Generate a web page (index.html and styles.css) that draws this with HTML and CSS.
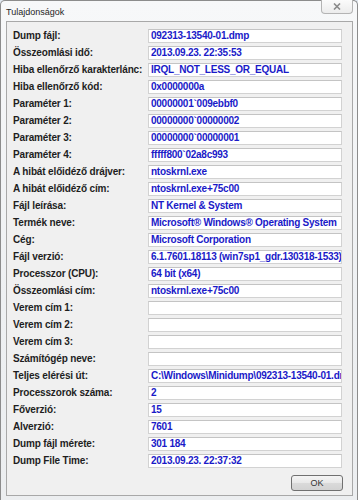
FILE: index.html
```html
<!DOCTYPE html>
<html>
<head>
<meta charset="utf-8">
<link rel="stylesheet" href="styles.css">
</head>
<body>
<div class="window">
  <div class="titlebar">
    <span class="title">Tulajdonságok</span>
    <div class="close">
      <svg width="8" height="7" viewBox="0 0 8 7"><path d="M1 0.5 L7 6.5 M7 0.5 L1 6.5" stroke="#8a8a8a" stroke-width="1.6" fill="none"/></svg>
    </div>
  </div>
  <div class="panel">
    <div class="grid">
      <div class="label">Dump fájl:</div><div class="value">092313-13540-01.dmp</div>
      <div class="label">Összeomlási idő:</div><div class="value">2013.09.23. 22:35:53</div>
      <div class="label">Hiba ellenőrző karakterlánc:</div><div class="value">IRQL_NOT_LESS_OR_EQUAL</div>
      <div class="label">Hiba ellenőrző kód:</div><div class="value">0x0000000a</div>
      <div class="label">Paraméter 1:</div><div class="value">00000001`009ebbf0</div>
      <div class="label">Paraméter 2:</div><div class="value">00000000`00000002</div>
      <div class="label">Paraméter 3:</div><div class="value">00000000`00000001</div>
      <div class="label">Paraméter 4:</div><div class="value">fffff800`02a8c993</div>
      <div class="label">A hibát előidéző drájver:</div><div class="value">ntoskrnl.exe</div>
      <div class="label">A hibát előidéző cím:</div><div class="value">ntoskrnl.exe+75c00</div>
      <div class="label">Fájl leírása:</div><div class="value">NT Kernel &amp; System</div>
      <div class="label">Termék neve:</div><div class="value">Microsoft® Windows® Operating System</div>
      <div class="label">Cég:</div><div class="value">Microsoft Corporation</div>
      <div class="label">Fájl verzió:</div><div class="value">6.1.7601.18113 (win7sp1_gdr.130318-1533)</div>
      <div class="label">Processzor (CPU):</div><div class="value">64 bit (x64)</div>
      <div class="label">Összeomlási cím:</div><div class="value">ntoskrnl.exe+75c00</div>
      <div class="label">Verem cím 1:</div><div class="value"></div>
      <div class="label">Verem cím 2:</div><div class="value"></div>
      <div class="label">Verem cím 3:</div><div class="value"></div>
      <div class="label">Számítógép neve:</div><div class="value"></div>
      <div class="label">Teljes elérési út:</div><div class="value">C:\Windows\Minidump\092313-13540-01.dmp</div>
      <div class="label">Processzorok száma:</div><div class="value">2</div>
      <div class="label">Főverzió:</div><div class="value">15</div>
      <div class="label">Alverzió:</div><div class="value">7601</div>
      <div class="label">Dump fájl mérete:</div><div class="value">301 184</div>
      <div class="label">Dump File Time:</div><div class="value">2013.09.23. 22:37:32</div>
    </div>
    <div class="buttons">
      <div class="btn">OK</div>
    </div>
  </div>
</div>
</body>
</html>
```
FILE: styles.css
```css
html, body {
  margin: 0;
  padding: 0;
  background: #dfe6ee;
}
.window {
  width: 358px;
  height: 500px;
  box-sizing: border-box;
  border: 1px solid #8c8c8c;
  border-bottom: none;
  border-radius: 5px 5px 0 0;
  background: linear-gradient(#f7f8f9, #eef0f2 60%, #eceef0);
  display: flex;
  flex-direction: column;
  padding: 0 4px 4px 5px;
  font-family: "Liberation Sans", Arial, sans-serif;
}
.titlebar {
  height: 20px;
  display: flex;
  align-items: flex-start;
}
.title {
  font-size: 9px;
  color: #1e1e1e;
  margin-top: 6px;
  margin-left: 0;
}
.close {
  margin-left: auto;
  margin-top: -1px;
  width: 32px;
  height: 14px;
  box-sizing: border-box;
  border: 1px solid #b4b4b4;
  border-top: none;
  border-radius: 0 0 4px 4px;
  background: linear-gradient(#fbfbfb, #ececec);
  display: flex;
  align-items: center;
  justify-content: center;
}
.panel {
  flex: 1;
  border: 1px solid #a8a8a8;
  background: #f0f0f0;
  padding: 7px 9px 4px 6px;
  display: flex;
  flex-direction: column;
}
.grid {
  display: grid;
  grid-template-columns: 135px 194px;
  grid-auto-rows: 14px;
  row-gap: 3px;
}
.label {
  font-size: 10px;
  font-weight: bold;
  color: #1e1e1e;
  line-height: 14px;
  letter-spacing: -0.15px;
  white-space: nowrap;
}
.value {
  box-sizing: border-box;
  height: 14px;
  background: #ffffff;
  border: 1px solid #d2d2d2;
  border-top-color: #c4c4c4;
  font-size: 10px;
  font-weight: bold;
  color: #1a1ac8;
  line-height: 12px;
  padding-left: 2px;
  letter-spacing: -0.25px;
  white-space: nowrap;
  overflow: hidden;
}
.buttons {
  margin-top: auto;
  display: flex;
  justify-content: flex-end;
}
.btn {
  width: 52px;
  height: 16px;
  box-sizing: border-box;
  border: 1px solid #707070;
  border-radius: 3px;
  background: linear-gradient(#f4f4f4, #e8e8e8 50%, #dadada 51%, #d2d2d2);
  font-size: 9px;
  color: #333;
  display: flex;
  align-items: center;
  justify-content: center;
}
```
